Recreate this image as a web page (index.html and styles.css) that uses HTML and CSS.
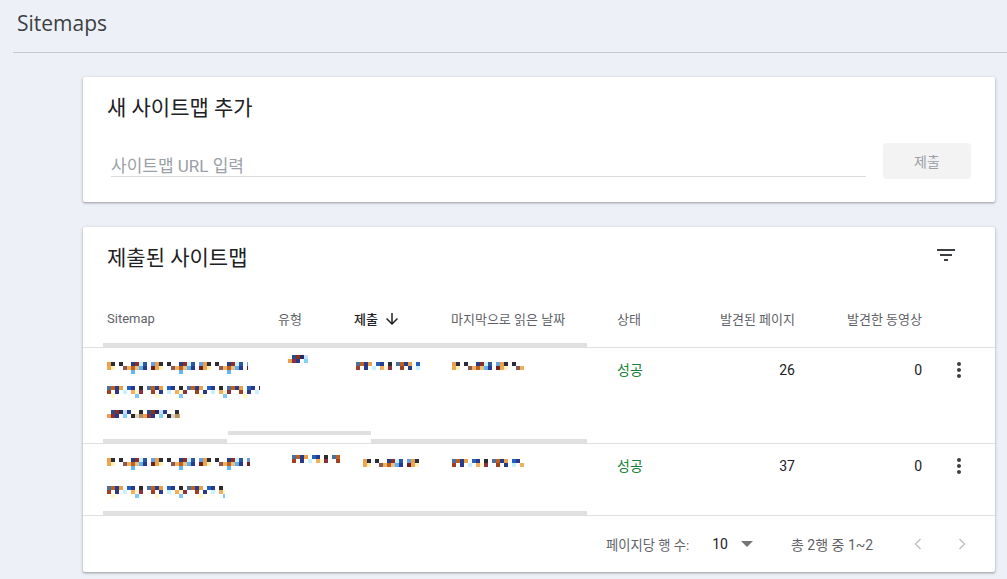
FILE: index.html
```html
<!DOCTYPE html>
<html lang="ko">
<head>
<meta charset="utf-8">
<title>Sitemaps</title>
<link rel="stylesheet" href="styles.css">
</head>
<body>
<div class="page">
  <header class="topbar">
    <h1 class="title">Sitemaps</h1>
  </header>

  <section class="card add-card">
    <h2 class="card-title">새 사이트맵 추가</h2>
    <div class="add-row">
      <div class="field"><span class="placeholder">사이트맵 URL 입력</span></div>
      <button class="submit-btn" type="button">제출</button>
    </div>
  </section>

  <section class="card list-card">
    <div class="list-head">
      <h2 class="card-title">제출된 사이트맵</h2>
      <svg class="filter-icon" viewBox="0 0 24 24" width="24" height="24"><path d="M10 18h4v-2h-4v2zM3 6v2h18V6H3zm3 7h12v-2H6v2z"/></svg>
    </div>

    <div class="grid-row head-row">
      <div class="cell">Sitemap</div>
      <div class="cell">유형</div>
      <div class="cell sorted">제출 <svg class="sort-icon" viewBox="0 0 24 24" width="18" height="18"><path d="M20 12l-1.41-1.41L13 16.17V4h-2v12.17l-5.58-5.59L4 12l8 8 8-8z"/></svg></div>
      <div class="cell">마지막으로 읽은 날짜</div>
      <div class="cell">상태</div>
      <div class="cell num">발견된 페이지</div>
      <div class="cell num">발견한 동영상</div>
      <div class="cell"></div>
    </div>

    <div class="grid-row data-row row-one">
      <div class="cell lines">
        <span class="rd rd-a w141"></span>
        <span class="rd rd-b w153 l2"></span>
        <span class="rd rd-c w73 thin l3"></span>
      </div>
      <div class="cell"><span class="rd rd-c w20 thin type1"></span></div>
      <div class="cell"><span class="rd rd-b w64 thin date"></span></div>
      <div class="cell"><span class="rd rd-a w72 thin date ml1"></span></div>
      <div class="cell status">성공</div>
      <div class="cell num val">26</div>
      <div class="cell num val">0</div>
      <div class="cell menu"><svg viewBox="0 0 24 24" width="24" height="24"><path d="M12 8c1.1 0 2-.9 2-2s-.9-2-2-2-2 .9-2 2 .9 2 2 2zm0 2c-1.1 0-2 .9-2 2s.9 2 2 2 2-.9 2-2-.9-2-2-2zm0 6c-1.1 0-2 .9-2 2s.9 2 2 2 2-.9 2-2-.9-2-2-2z"/></svg></div>
    </div>

    <div class="grid-row data-row row-two">
      <div class="cell lines">
        <span class="rd rd-a w143 r2a"></span>
        <span class="rd rd-b w118 r2b"></span>
      </div>
      <div class="cell"><span class="rd rd-b w48 thin type2"></span></div>
      <div class="cell"><span class="rd rd-a w57 thin date2 ml9"></span></div>
      <div class="cell"><span class="rd rd-b w72 thin date2 ml1"></span></div>
      <div class="cell status">성공</div>
      <div class="cell num val">37</div>
      <div class="cell num val">0</div>
      <div class="cell menu"><svg viewBox="0 0 24 24" width="24" height="24"><path d="M12 8c1.1 0 2-.9 2-2s-.9-2-2-2-2 .9-2 2 .9 2 2 2zm0 2c-1.1 0-2 .9-2 2s.9 2 2 2 2-.9 2-2-.9-2-2-2zm0 6c-1.1 0-2 .9-2 2s.9 2 2 2 2-.9 2-2-.9-2-2-2z"/></svg></div>
    </div>

    <div class="pager">
      <span class="pager-label">페이지당 행 수:</span>
      <span class="pager-size">10</span>
      <svg class="caret" viewBox="0 0 12 6" width="12" height="6"><path d="M0 0h12L6 6z"/></svg>
      <span class="pager-range">총 2행 중 1~2</span>
      <svg class="chev prev" viewBox="0 0 24 24" width="24" height="24"><path d="M14.5 7l-5 5 5 5" fill="none" stroke-width="1.3"/></svg>
      <svg class="chev next" viewBox="0 0 24 24" width="24" height="24"><path d="M9.5 7l5 5-5 5" fill="none" stroke-width="1.3"/></svg>
    </div>
  </section>
</div>
</body>
</html>
```

FILE: styles.css
```css
* { box-sizing: border-box; }
html, body { margin: 0; padding: 0; }
body {
  background: #edf1f7;
  font-family: Roboto, "Noto Sans CJK KR", sans-serif;
  color: #202124;
  width: 1007px;
  height: 579px;
  overflow: hidden;
}
.page { padding-left: 13px; }
.topbar {
  height: 53px;
  border-bottom: 1px solid #c6c8cc;
  display: flex;
  align-items: center;
  padding-left: 4px;
  padding-bottom: 7px;
}
.title {
  margin: 0;
  font-family: "Open Sans", Roboto, sans-serif;
  font-weight: 400;
  font-size: 21px;
  color: #3c4043;
}
.card {
  margin-left: 70px;
  width: 912px;
  background: #fff;
  border-radius: 2px;
  box-shadow: 0 1px 2px rgba(60,64,67,.35), 0 1px 3px 1px rgba(60,64,67,.12);
}
.add-card {
  margin-top: 24px;
  height: 125px;
  padding: 17px 24px 0 24px;
}
.card-title {
  margin: 0;
  font-size: 21px;
  line-height: 28px;
  font-weight: 400;
  color: #202124;
}
.add-row {
  display: flex;
  margin-top: 21px;
  height: 36px;
}
.field {
  margin-left: 4px;
  width: 755px;
  height: 29px;
  border-bottom: 1px solid #dadce0;
  padding-top: 7px;
  align-self: flex-end;
  margin-bottom: 2px;
}
.placeholder {
  display: block;
  font-size: 17px;
  line-height: 22px;
  color: #9aa0a6;
}
.submit-btn {
  margin-left: 17px;
  width: 88px;
  height: 36px;
  border: 0;
  border-radius: 4px;
  background: #f3f3f3;
  color: #9aa0a6;
  font-family: Roboto, "Noto Sans CJK KR", sans-serif;
  font-size: 14px;
  padding: 0;
}
.list-card {
  margin-top: 25px;
  height: 345px;
  position: relative;
}
.list-head {
  height: 63px;
  display: flex;
  justify-content: space-between;
  align-items: flex-start;
  padding: 16px 37px 0 24px;
}
.list-head .card-title { margin-top: 1px; }
.filter-icon { fill: #3c4043; }

.grid-row {
  display: grid;
  grid-template-columns: 195px 76px 97px 166px 72px 106px 127px 73px;
  position: relative;
  border-bottom: 1px solid #e0e0e0;
}
.head-row {
  height: 58px;
  align-items: center;
  font-size: 13px;
  color: #5f6368;
}
.head-row .cell:first-child { padding-left: 24px; }
.head-row::after {
  content: "";
  position: absolute;
  left: 20px;
  width: 484px;
  bottom: 0;
  height: 4px;
  background: #e0e0e0;
}
.cell { display: flex; align-items: center; }
.head-row .cell { height: 20px; }
.num { justify-content: flex-end; }
.sorted { color: #202124; font-weight: 500; }
.sort-icon { fill: #202124; margin-left: 5px; }

.data-row {
  align-items: start;
  font-size: 14px;
  line-height: 20px;
}
.data-row .cell { align-items: flex-start; }
.data-row .cell:first-child { padding-left: 24px; }
.row-one { height: 96px; padding-top: 12px; }
.row-two { height: 72px; padding-top: 12px; }
.row-one::after {
  content: "";
  position: absolute;
  left: 20px;
  width: 484px;
  bottom: 0;
  height: 12px;
  background:
    linear-gradient(#e0e0e0, #e0e0e0) 0 8px / 124px 4px no-repeat,
    linear-gradient(#e0e0e0, #e0e0e0) 125px 0 / 143px 4px no-repeat,
    linear-gradient(#e0e0e0, #e0e0e0) 268px 8px / 216px 4px no-repeat;
}
.row-two::after {
  content: "";
  position: absolute;
  left: 20px;
  width: 484px;
  bottom: 0;
  height: 4px;
  background: #e0e0e0;
}
.lines { flex-direction: column; }
.status { color: #188038; }
.val { color: #202124; }
.menu { justify-content: center; margin-top: -2px; }
.menu svg { fill: #3c4043; }

/* redacted pixel blocks */
.rd { display: block; height: 12px; }
.rd.thin { height: 8px; }
.rd-a {
  background:
    repeating-linear-gradient(90deg, #e8a04a 0 4px, #2b2b3b 4px 8px, #fff 8px 12px, #2b2b3b 12px 16px, #fff 16px 24px, #2a3a8a 24px 28px, #8a3020 28px 32px, #c8f0ff 32px 36px, #2b5a9a 36px 40px, #fff 40px 44px, #6aa0e0 44px 48px) 0 0 / 100% 4px no-repeat,
    repeating-linear-gradient(90deg, #f0a850 0 4px, #fff4c0 4px 8px, #fff 8px 16px, #8a5a50 16px 20px, #f0b060 20px 24px, #c06020 24px 28px, #e8c080 28px 32px, #60b0f0 32px 36px, #2a3a8a 36px 40px, #fff 40px 44px, #702020 44px 48px) 0 4px / 100% 4px no-repeat,
    repeating-linear-gradient(90deg, #fff 0 24px, #60b8f8 24px 28px, #fff 28px 48px) 0 8px / 100% 4px no-repeat;
}
.rd-b {
  background:
    repeating-linear-gradient(90deg, #4a70a0 0 4px, #c06020 4px 8px, #2a3a8a 8px 12px, #e8a04a 12px 16px, #fff 16px 20px, #2060c0 20px 24px, #2a3a8a 24px 28px, #fff 28px 32px, #2b2b2b 32px 36px, #fff 36px 40px) 0 0 / 100% 4px no-repeat,
    repeating-linear-gradient(90deg, #a04020 0 4px, #fff 4px 8px, #2a3a8a 8px 12px, #fff 12px 16px, #c8f0ff 16px 20px, #fff 20px 24px, #f0b060 24px 28px, #fff8d0 28px 32px, #8a3040 32px 36px, #fff 36px 44px) 0 4px / 100% 4px no-repeat,
    repeating-linear-gradient(90deg, #fff 0 4px, #fff8c0 4px 8px, #fff 8px 28px, #80c8f8 28px 32px, #fff 32px 44px) 0 8px / 100% 4px no-repeat;
}
.rd-c {
  background:
    repeating-linear-gradient(90deg, #fff 0 4px, #2b4a8a 4px 8px, #8a3020 8px 12px, #2a2a5a 12px 16px, #c8e0ff 16px 20px, #2a3a8a 20px 24px, #fff 24px 32px, #2b2b2b 32px 36px) 0 0 / 100% 4px no-repeat,
    repeating-linear-gradient(90deg, #e8a04a 0 4px, #8a3040 4px 8px, #2a3a8a 8px 12px, #fff 12px 16px, #80d0f8 16px 20px, #fff 20px 24px, #2b2b2b 24px 28px, #e0d0c0 28px 32px, #b09070 32px 36px) 0 4px / 100% 4px no-repeat;
}
.w141 { width: 141px; }
.w153 { width: 153px; }
.w73 { width: 73px; }
.w20 { width: 20px; }
.w64 { width: 64px; }
.w72 { width: 72px; }
.w143 { width: 143px; }
.w118 { width: 118px; }
.w48 { width: 48px; }
.w57 { width: 57px; }
.lines .rd:first-child { margin-top: 2px; }
.l2 { margin-top: 12px; }
.l3 { margin-top: 12px; }
.type1 { margin-left: 10px; margin-top: -5px; }
.type2 { margin-left: 14px; margin-top: -1px; }
.date { margin-top: 2px; margin-left: 2px; }
.date2 { margin-top: 3px; }
.ml1 { margin-left: 1px; }
.ml9 { margin-left: 9px; }
.r2a { margin-top: -1px; }
.r2b { margin-top: 16px; }

.pager {
  height: 56px;
  display: flex;
  align-items: center;
  padding-left: 523px;
  font-size: 13px;
  color: #5f6368;
}
.pager-label { font-size: 13.3px; }
.pager-size { margin-left: 23px; font-size: 14px; color: #202124; }
.caret { margin-left: 13px; fill: #757575; }
.pager-range { margin-left: 38px; font-size: 14px; }
.chev { stroke: #bdbdbd; }
.prev { margin-left: 33px; }
.next { margin-left: 20px; }
```
